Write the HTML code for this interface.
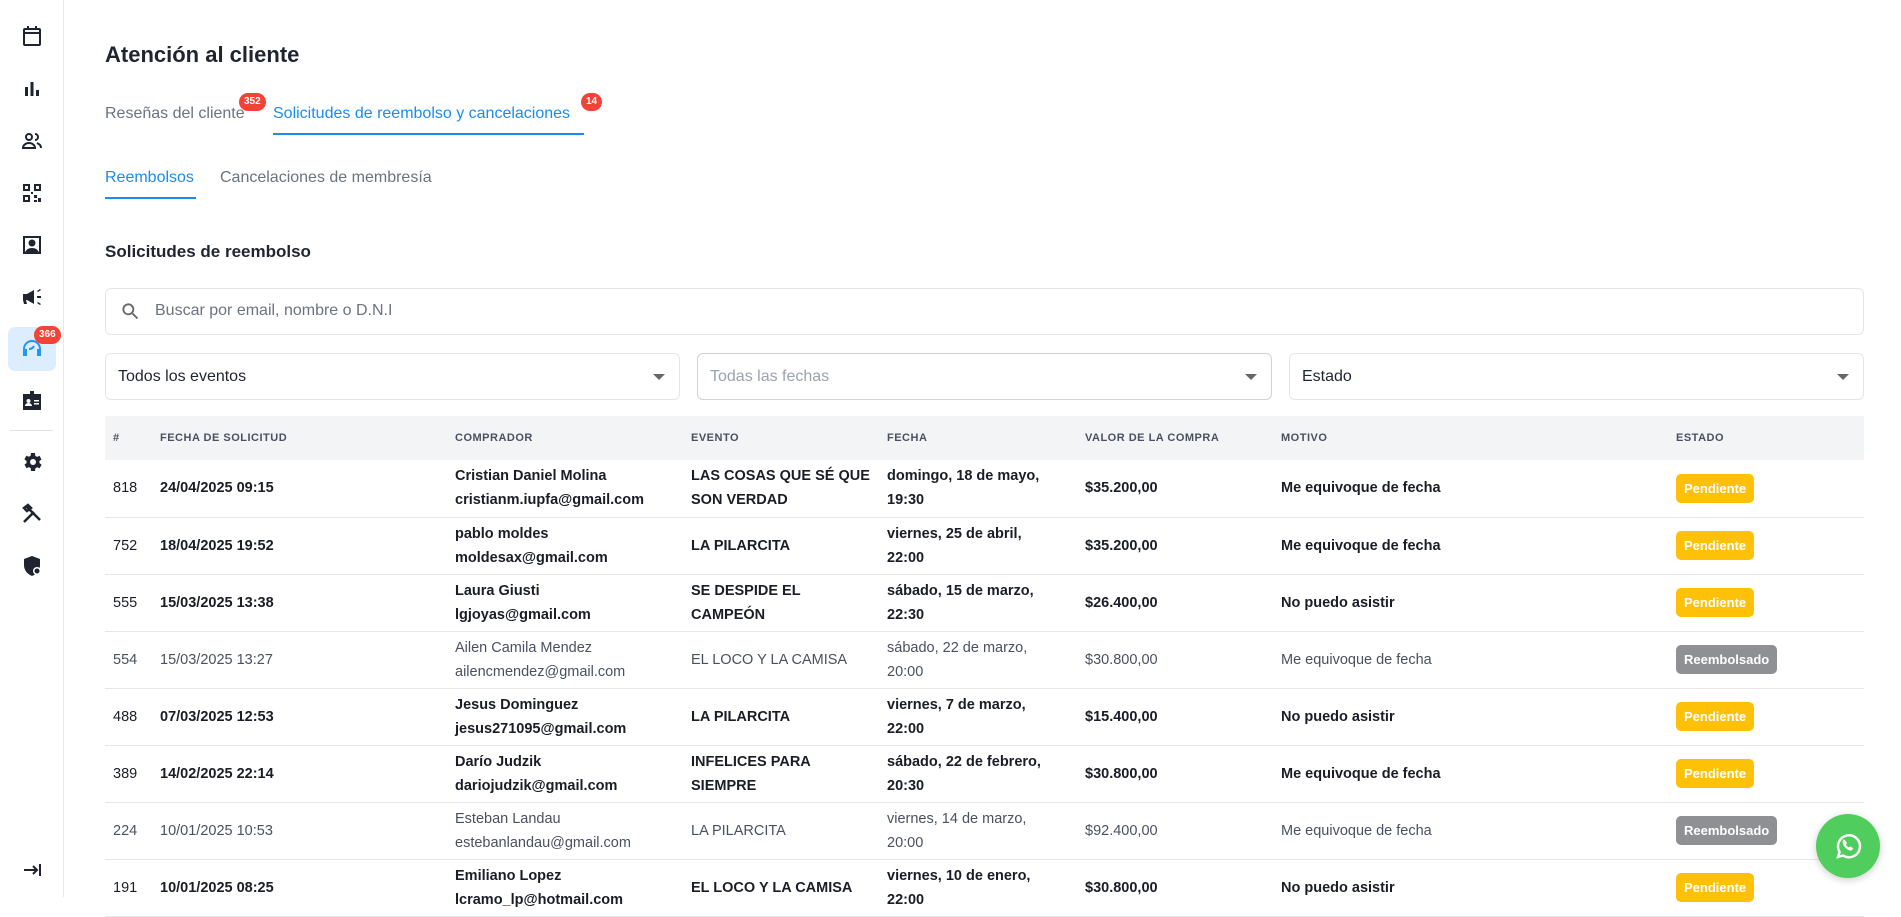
<!DOCTYPE html>
<html><head><meta charset="utf-8"><style>
*{box-sizing:border-box;margin:0;padding:0}
body{width:1901px;height:897px;overflow:hidden;background:#fff;font-family:"Liberation Sans",sans-serif;color:#1f2430;position:relative}
.side{position:absolute;left:0;top:0;width:64px;height:897px;border-right:1px solid #e6e8ec}
.ic{position:absolute;left:20px;width:24px;height:24px}
.main{position:absolute;left:105px;top:0;right:37px}
.title{position:absolute;top:42px;font-size:22px;font-weight:bold;color:#1f2430}
.tab{position:absolute;font-size:16px;color:#6b7280}
.badge{position:absolute;background:#f44336;color:#fff;border-radius:10px;font-size:10px;font-weight:bold;height:18px;line-height:18px;padding:0 5px;text-align:center}
.search{position:absolute;top:288px;left:0;width:1759px;height:47px;border:1px solid #e3e5e9;border-radius:6px}
.sel{position:absolute;top:353px;height:47px;border:1px solid #e3e5e9;border-radius:6px;font-size:16px;line-height:45px;padding-left:12px}
.sel:after{content:"";position:absolute;right:14px;top:20px;border-left:6px solid transparent;border-right:6px solid transparent;border-top:6px solid #666}
table{position:absolute;top:416px;left:0;width:1759px;border-collapse:collapse;table-layout:fixed}
th{height:44px;background:#f3f4f6;font-size:11px;letter-spacing:.5px;text-align:left;font-weight:bold;color:#4b5060;padding-left:8px}
td{height:57px;border-bottom:1px solid #e5e7eb;font-size:14.5px;line-height:24px;padding-left:8px;white-space:nowrap;vertical-align:middle}
tr.b td{font-weight:bold;color:#1a1d26}
tr.n td{color:#4b5060}
td.id{font-weight:normal!important;color:#4b5060}
.p{display:inline-block;background:#ffc107;color:#fff;font-weight:bold;font-size:13px;height:29px;line-height:29px;padding:0 8px;border-radius:5px}
.r{display:inline-block;background:#8f9093;color:#fff;font-weight:bold;font-size:13px;height:29px;line-height:29px;padding:0 8px;border-radius:5px}
</style></head><body>
<div class="side">
<svg class="ic" style="top:24px" viewBox="0 0 24 24" fill="none" stroke="#1f2430" stroke-width="2"><rect x="4" y="5" width="16" height="16" rx="1"/><path d="M4 9h16M8 2v4M16 2v4"/></svg>
<svg class="ic" style="top:77px" viewBox="0 0 24 24" fill="#1f2430"><rect x="5" y="10" width="3" height="9"/><rect x="10.5" y="5" width="3" height="14"/><rect x="16" y="13" width="3" height="6"/></svg>
<svg class="ic" style="top:129px" viewBox="0 0 24 24" fill="none" stroke="#1f2430" stroke-width="2"><circle cx="9" cy="8" r="3"/><path d="M3 19c0-3 3-5 6-5s6 2 6 5zM15 5a3 3 0 010 6M17 14c2 1 4 2 4 5"/></svg>
<svg class="ic" style="top:181px" viewBox="0 0 24 24" fill="#1f2430"><path d="M3 3h7v7H3zM5 5v3h3V5zM14 3h7v7h-7zM16 5v3h3V5zM3 14h7v7H3zM5 16v3h3v-3zM14 14h3v3h-3zM18 17h3v4h-3zM14 19h3v2h-3zM11 11h2v2h-2z"/></svg>
<svg class="ic" style="top:233px" viewBox="0 0 24 24" fill="#1f2430"><path d="M3 3h18v18h-3v-2h1V5H5v14h1v2H3z"/><circle cx="12" cy="10" r="3.5"/><path d="M5 21c0-4 3-6 7-6s7 2 7 6z"/></svg>
<svg class="ic" style="top:285px" viewBox="0 0 24 24" fill="#1f2430"><path d="M3 9h4l7-4v14l-7-4H6l1 4H4l-1-4z"/><path d="M17 11h4v2h-4zM17 6l3-2 1 1-3 2zM17 18l3 2 1-1-3-2z"/></svg>
<div style="position:absolute;left:8px;top:327px;width:48px;height:44px;background:#dcedff;border-radius:7px"></div>
<svg class="ic" style="top:337px" viewBox="0 0 24 24" fill="none" stroke="#2196f3" stroke-width="2"><path d="M4 16v-4a8 8 0 0116 0v4M4 13h2v5H4zM18 13h2v5h-2zM9 12c2 0 4-1 5-3"/></svg>
<div class="badge" style="left:34px;top:326px;font-size:10px">366</div>
<svg class="ic" style="top:389px" viewBox="0 0 24 24" fill="#1f2430"><path d="M10 2h4v3h7v16H3V5h7z"/><circle cx="8.5" cy="12" r="2" fill="#fff"/><path d="M5 17c0-2 2-3 3.5-3s3.5 1 3.5 3z M14 11h5v1.5h-5zM14 14h5v1.5h-5z" fill="#fff"/></svg>
<div style="position:absolute;left:10px;top:430px;width:43px;height:1px;background:#dfe1e6"></div>
<svg class="ic" style="top:450px" viewBox="0 0 24 24" fill="#1f2430"><path d="M19.4 13a7.5 7.5 0 000-2l2.1-1.6-2-3.5-2.5 1a7 7 0 00-1.700-1L15 3h-4l-.4 2.7a7 7 0 00-1.7 1l-2.5-1-2 3.5L6.6 11a7.5 7.5 0 000 2l-2.1 1.6 2 3.5 2.5-1a7 7 0 001.7 1L11 21h4l.4-2.7a7 7 0 001.7-1l2.5 1 2-3.5z"/><circle cx="13" cy="12" r="3" fill="#fff"/></svg>
<svg class="ic" style="top:502px" viewBox="0 0 24 24" fill="none" stroke="#1f2430" stroke-width="2.5"><path d="M4 20L14 10M6 4l14 14M4 6l4-3 3 3-4 3z"/></svg>
<svg class="ic" style="top:554px" viewBox="0 0 24 24" fill="#1f2430"><path d="M12 2l8 3v6c0 5-3 9-8 11-5-2-8-6-8-11V5z"/><circle cx="17" cy="17" r="4" fill="#fff"/><circle cx="17" cy="17" r="2.5"/></svg>
<svg class="ic" style="top:858px" viewBox="0 0 24 24" fill="none" stroke="#1f2430" stroke-width="2"><path d="M4 12h13M13 8l4 4-4 4M20 6v12"/></svg>
</div>
<div class="main">
<div class="title">Atención al cliente</div>
<div class="tab" style="top:105px;left:0">Reseñas del cliente</div>
<div class="badge" style="left:134px;top:93px">352</div>
<div class="tab" style="top:105px;left:168px;color:#1a8cf0">Solicitudes de reembolso y cancelaciones</div>
<div class="badge" style="left:476px;top:93px">14</div>
<div style="position:absolute;left:168px;top:133px;width:311px;height:2px;background:#1a8cf0"></div>
<div class="tab" style="top:169px;left:0;color:#1a8cf0">Reembolsos</div>
<div style="position:absolute;left:0;top:197px;width:91px;height:2px;background:#1a8cf0"></div>
<div class="tab" style="top:169px;left:115px">Cancelaciones de membresía</div>
<div style="position:absolute;top:242px;font-size:17px;font-weight:bold">Solicitudes de reembolso</div>
<div class="search"><svg style="position:absolute;left:14px;top:12px" width="20" height="20" viewBox="0 0 24 24" fill="none" stroke="#666" stroke-width="2.2"><circle cx="10" cy="10" r="6"/><path d="M15 15l6 6"/></svg><span style="position:absolute;left:49px;top:13px;font-size:16px;color:#6b7280">Buscar por email, nombre o D.N.I</span></div>
<div class="sel" style="left:0;width:575px">Todos los eventos</div>
<div class="sel" style="left:592px;width:575px;color:#9ca3af;border-color:#cfd2d8">Todas las fechas</div>
<div class="sel" style="left:1184px;width:575px">Estado</div>
<table>
<colgroup><col style="width:47px"><col style="width:295px"><col style="width:236px"><col style="width:196px"><col style="width:198px"><col style="width:196px"><col style="width:395px"><col style="width:196px"></colgroup>
<tr><th>#</th><th>FECHA DE SOLICITUD</th><th>COMPRADOR</th><th>EVENTO</th><th>FECHA</th><th>VALOR DE LA COMPRA</th><th>MOTIVO</th><th>ESTADO</th></tr>
<tr class="b"><td class="id">818</td><td>24/04/2025 09:15</td><td>Cristian Daniel Molina<br>cristianm.iupfa@gmail.com</td><td>LAS COSAS QUE SÉ QUE<br>SON VERDAD</td><td>domingo, 18 de mayo,<br>19:30</td><td>$35.200,00</td><td>Me equivoque de fecha</td><td><span class="p">Pendiente</span></td></tr>
<tr class="b"><td class="id">752</td><td>18/04/2025 19:52</td><td>pablo moldes<br>moldesax@gmail.com</td><td>LA PILARCITA</td><td>viernes, 25 de abril,<br>22:00</td><td>$35.200,00</td><td>Me equivoque de fecha</td><td><span class="p">Pendiente</span></td></tr>
<tr class="b"><td class="id">555</td><td>15/03/2025 13:38</td><td>Laura Giusti<br>lgjoyas@gmail.com</td><td>SE DESPIDE EL<br>CAMPEÓN</td><td>sábado, 15 de marzo,<br>22:30</td><td>$26.400,00</td><td>No puedo asistir</td><td><span class="p">Pendiente</span></td></tr>
<tr class="n"><td class="id">554</td><td>15/03/2025 13:27</td><td>Ailen Camila Mendez<br>ailencmendez@gmail.com</td><td>EL LOCO Y LA CAMISA</td><td>sábado, 22 de marzo,<br>20:00</td><td>$30.800,00</td><td>Me equivoque de fecha</td><td><span class="r">Reembolsado</span></td></tr>
<tr class="b"><td class="id">488</td><td>07/03/2025 12:53</td><td>Jesus Dominguez<br>jesus271095@gmail.com</td><td>LA PILARCITA</td><td>viernes, 7 de marzo,<br>22:00</td><td>$15.400,00</td><td>No puedo asistir</td><td><span class="p">Pendiente</span></td></tr>
<tr class="b"><td class="id">389</td><td>14/02/2025 22:14</td><td>Darío Judzik<br>dariojudzik@gmail.com</td><td>INFELICES PARA<br>SIEMPRE</td><td>sábado, 22 de febrero,<br>20:30</td><td>$30.800,00</td><td>Me equivoque de fecha</td><td><span class="p">Pendiente</span></td></tr>
<tr class="n"><td class="id">224</td><td>10/01/2025 10:53</td><td>Esteban Landau<br>estebanlandau@gmail.com</td><td>LA PILARCITA</td><td>viernes, 14 de marzo,<br>20:00</td><td>$92.400,00</td><td>Me equivoque de fecha</td><td><span class="r">Reembolsado</span></td></tr>
<tr class="b"><td class="id">191</td><td>10/01/2025 08:25</td><td>Emiliano Lopez<br>lcramo_lp@hotmail.com</td><td>EL LOCO Y LA CAMISA</td><td>viernes, 10 de enero,<br>22:00</td><td>$30.800,00</td><td>No puedo asistir</td><td><span class="p">Pendiente</span></td></tr>
</table>
</div>
<div style="position:absolute;left:1816px;top:814px;width:64px;height:64px;border-radius:50%;background:#4fce5d;box-shadow:0 2px 8px rgba(0,0,0,.2)">
<svg style="position:absolute;left:16px;top:16px" width="32" height="32" viewBox="0 0 32 32" fill="none" stroke="#fff" stroke-width="2.4"><path d="M6 27l1.6-5A11 11 0 1111 25.5z"/><path d="M12 10c-1 1-1.5 2.5 0 5s4 4.5 6 5c1 .3 2-.5 2.5-1.5l-2-1.5-1.5 1c-1.5-.6-3-2-3.6-3.6l1-1.4-1.5-2z" fill="#fff" stroke-width="1"/></svg>
</div>
</body></html>
